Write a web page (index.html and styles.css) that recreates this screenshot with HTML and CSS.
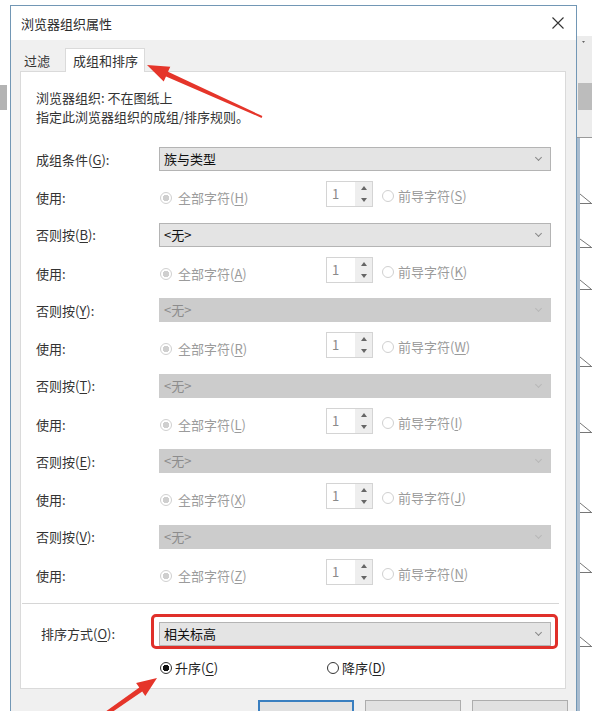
FILE: index.html
```html
<!DOCTYPE html>
<html>
    <head>
        <meta charset="utf-8">
        <link rel="stylesheet" href="styles.css">
    </head>
    <body>
        <div class="screen">
            <div class="edgeLeft"><span class="edgeBlock"></span></div>

            <div class="dialog">
                <div class="titlebar">
                    <span class="title">浏览器组织属性</span>
                    <svg class="close" width="12" height="12" viewBox="0 0 12 12">
                        <path d="M0.5 0.5 L11.5 11.5 M11.5 0.5 L0.5 11.5" stroke="#333" stroke-width="1.1" fill="none"/>
                    </svg>
                </div>

                <div class="body">
                    <div class="tabs">
                        <div class="tab">过滤</div>
                        <div class="tab active">成组和排序</div>
                    </div>

                    <div class="panel">
                        <p class="desc">浏览器组织: 不在图纸上<br>指定此浏览器组织的成组/排序规则。</p>

                        <div class="group">
                            <div class="row">
                                <span class="label">成组条件(<u>G</u>):</span>
                                <div class="combo">族与类型<span class="chev"></span></div>
                            </div>
                            <div class="row use">
                                <span class="label">使用:</span>
                                <span class="radio dis on"><i></i><span>全部字符(<u>H</u>)</span></span>
                                <span class="spin"><span class="val">1</span><span class="btns"><b class="up"></b><b class="down"></b></span></span>
                                <span class="radio dis second"><i></i><span>前导字符(<u>S</u>)</span></span>
                            </div>
                        </div>

                        <div class="group">
                            <div class="row">
                                <span class="label">否则按(<u>B</u>):</span>
                                <div class="combo">&lt;无&gt;<span class="chev"></span></div>
                            </div>
                            <div class="row use">
                                <span class="label">使用:</span>
                                <span class="radio dis on"><i></i><span>全部字符(<u>A</u>)</span></span>
                                <span class="spin"><span class="val">1</span><span class="btns"><b class="up"></b><b class="down"></b></span></span>
                                <span class="radio dis second"><i></i><span>前导字符(<u>K</u>)</span></span>
                            </div>
                        </div>

                        <div class="group">
                            <div class="row">
                                <span class="label">否则按(<u>Y</u>):</span>
                                <div class="combo off">&lt;无&gt;<span class="chev"></span></div>
                            </div>
                            <div class="row use">
                                <span class="label">使用:</span>
                                <span class="radio dis on"><i></i><span>全部字符(<u>R</u>)</span></span>
                                <span class="spin"><span class="val">1</span><span class="btns"><b class="up"></b><b class="down"></b></span></span>
                                <span class="radio dis second"><i></i><span>前导字符(<u>W</u>)</span></span>
                            </div>
                        </div>

                        <div class="group">
                            <div class="row">
                                <span class="label">否则按(<u>T</u>):</span>
                                <div class="combo off">&lt;无&gt;<span class="chev"></span></div>
                            </div>
                            <div class="row use">
                                <span class="label">使用:</span>
                                <span class="radio dis on"><i></i><span>全部字符(<u>L</u>)</span></span>
                                <span class="spin"><span class="val">1</span><span class="btns"><b class="up"></b><b class="down"></b></span></span>
                                <span class="radio dis second"><i></i><span>前导字符(<u>I</u>)</span></span>
                            </div>
                        </div>

                        <div class="group">
                            <div class="row">
                                <span class="label">否则按(<u>E</u>):</span>
                                <div class="combo off">&lt;无&gt;<span class="chev"></span></div>
                            </div>
                            <div class="row use">
                                <span class="label">使用:</span>
                                <span class="radio dis on"><i></i><span>全部字符(<u>X</u>)</span></span>
                                <span class="spin"><span class="val">1</span><span class="btns"><b class="up"></b><b class="down"></b></span></span>
                                <span class="radio dis second"><i></i><span>前导字符(<u>J</u>)</span></span>
                            </div>
                        </div>

                        <div class="group">
                            <div class="row">
                                <span class="label">否则按(<u>V</u>):</span>
                                <div class="combo off">&lt;无&gt;<span class="chev"></span></div>
                            </div>
                            <div class="row use">
                                <span class="label">使用:</span>
                                <span class="radio dis on"><i></i><span>全部字符(<u>Z</u>)</span></span>
                                <span class="spin"><span class="val">1</span><span class="btns"><b class="up"></b><b class="down"></b></span></span>
                                <span class="radio dis second"><i></i><span>前导字符(<u>N</u>)</span></span>
                            </div>
                        </div>

                        <div class="sep"></div>

                        <div class="row sort">
                            <span class="label">排序方式(<u>O</u>):</span>
                            <div class="combo marked">相关标高<span class="chev"></span></div>
                        </div>
                        <div class="order">
                            <span class="radio on active"><i></i><span>升序(<u>C</u>)</span></span>
                            <span class="radio"><i></i><span>降序(<u>D</u>)</span></span>
                        </div>
                    </div>

                    <div class="buttons">
                        <button class="btn default"></button>
                        <button class="btn"></button>
                        <button class="btn"></button>
                    </div>
                </div>
            </div>

            <div class="edgeRight">
                <svg width="15" height="711" viewBox="0 0 15 711">
                    <rect x="0" y="36" width="15" height="101" fill="#ececec"/>
                    <rect x="1" y="83" width="14" height="27" fill="#bcbcbc"/>
                    <path d="M5 41 L8 41 L6.5 43 Z" fill="#666"/>
                    <line x1="0" y1="137.5" x2="15" y2="137.5" stroke="#9a9a9a"/>
                    <rect x="0" y="138" width="3" height="573" fill="#a9bccf"/>
                    <path d="M3 194 L14 203 M3 203.5 L15 203.5" stroke="#777" fill="none"/>
                    <path d="M3 239 L14 247 M3 247.5 L15 247.5" stroke="#777" fill="none"/>
                    <path d="M3 280 L14 289 M3 289.5 L15 289.5" stroke="#777" fill="none"/>
                    <path d="M3 357 L14 366 M3 366.5 L15 366.5" stroke="#777" fill="none"/>
                    <path d="M3 423 L14 432 M3 432.5 L15 432.5" stroke="#777" fill="none"/>
                    <path d="M3 503 L14 512 M3 512.5 L15 512.5" stroke="#777" fill="none"/>
                    <path d="M3 563 L14 572 M3 572.5 L15 572.5" stroke="#777" fill="none"/>
                    <path d="M3 637 L14 646 M3 646.5 L15 646.5" stroke="#777" fill="none"/>
                </svg>
            </div>

            <svg class="marks" width="592" height="711" viewBox="0 0 592 711">
                <polygon points="147,65 170.3,66.8 168,71.8 262.4,116.1 261.6,117.9 166,76.4 163.7,81.4" fill="#e5352a"/>
                <polygon points="157,678 145.3,696.1 142.2,691.6 101.2,719.6 98.8,716.4 139.3,687.6 136.1,683.1" fill="#e5352a"/>
            </svg>
        </div>
    </body>
</html>
```

FILE: styles.css
```css
body{
    margin: 0;
    background: white;
    font-family: "Noto Sans CJK SC", "Noto Sans", sans-serif;
    font-size: 13px;
    color: #222;
}
u{
    text-decoration: underline;
    text-underline-offset: 2px;
}

.screen{
    position: relative;
    display: flex;
    align-items: flex-start;
    width: 592px;
    height: 711px;
    overflow: hidden;
}
.edgeLeft{
    width: 10px;
    flex: none;
    padding-top: 85px;
}
.edgeBlock{
    display: block;
    width: 7px;
    height: 25px;
    background: #b3b3b3;
}
.edgeRight{
    width: 15px;
    flex: none;
}
.edgeRight svg{
    display: block;
}

/* dialog window */
.dialog{
    width: 567px;
    flex: none;
    margin-top: 5px;
    border: solid 1px #7297b5;
    box-sizing: border-box;
    background: #f0f0f0;
}
.titlebar{
    height: 34px;
    background: white;
    display: flex;
    align-items: center;
    justify-content: space-between;
    padding: 0 12px 0 10px;
}
.title{
    color: #2b2b2b;
}
.close{
    display: block;
}

.body{
    padding: 8px 10px 0 9px;
}
.tabs{
    display: flex;
    align-items: flex-end;
    height: 23px;
}
.tab{
    height: 21px;
    line-height: 21px;
    padding: 0 15px 0 4px;
    color: #333;
}
.tab.active{
    position: relative;
    z-index: 1;
    height: 24px;
    line-height: 24px;
    margin-bottom: -1px;
    padding: 0 6px 0 7px;
    background: white;
    border: solid 1px #dadada;
    border-bottom: none;
    box-sizing: border-box;
    width: 80px;
}

.panel{
    height: 618px;
    box-sizing: border-box;
    background: white;
    border: solid 1px #dadada;
    padding: 16px 14px 0 15px;
}
.desc{
    margin: 0 0 21px 0;
    line-height: 19px;
    color: #333;
}

.group{
    margin-bottom: 15.6px;
}
.row{
    display: flex;
    align-items: center;
}
.label{
    width: 123px;
    flex: none;
    color: #333;
}
.combo{
    position: relative;
    flex: 1;
    height: 24px;
    line-height: 22px;
    box-sizing: border-box;
    border: solid 1px #b4b4b4;
    background: #e4e4e4;
    padding-left: 4px;
    color: #111;
}
.combo.off{
    background: #cccccc;
    border-color: #cccccc;
    color: #8c8c8c;
}
.chev{
    position: absolute;
    right: 9px;
    top: 7px;
    width: 4px;
    height: 4px;
    border-right: solid 1px #888;
    border-bottom: solid 1px #888;
    transform: rotate(45deg);
}
.combo.off .chev{
    border-color: #b8b8b8;
}

.row.use{
    align-items: flex-start;
    height: 26px;
    margin-top: 10px;
}
.row.use .label{
    padding-top: 9px;
    line-height: 16px;
}

.radio{
    display: flex;
    align-items: center;
    gap: 6px;
    line-height: 16px;
    color: #222;
}
.radio i{
    display: block;
    flex: none;
    width: 12px;
    height: 12px;
    box-sizing: border-box;
    border-radius: 50%;
    border: solid 1px #333;
    background: white;
}
.radio.dis{
    color: #9b9b9b;
}
.radio.dis i{
    border-color: #d0d0d0;
}
.radio.dis.on i{
    background: radial-gradient(circle, #cfcfcf 0 3px, white 3.5px);
}
.row.use .radio{
    width: 167px;
    flex: none;
    padding: 9px 0 0 1px;
    box-sizing: border-box;
}
.row.use .radio.second{
    width: auto;
    padding: 7px 0 0 9px;
    gap: 4px;
}

.spin{
    display: flex;
    width: 47px;
    height: 26px;
    flex: none;
    box-sizing: border-box;
    border: solid 1px #d4d4d4;
}
.spin .val{
    flex: 1;
    line-height: 24px;
    padding-left: 5px;
    color: #8a8a8a;
}
.spin .btns{
    width: 17px;
    display: flex;
    flex-direction: column;
    background: #eeeeee;
}
.spin b{
    flex: 1;
    display: flex;
    align-items: center;
    justify-content: center;
}
.spin b::after{
    content: "";
    border-left: 3px solid transparent;
    border-right: 3px solid transparent;
}
.spin b.up::after{
    border-bottom: 4px solid #666;
}
.spin b.down::after{
    border-top: 4px solid #666;
}

.sep{
    height: 1px;
    background: #d6d6d6;
    margin: 18px -8px 0 -14px;
}

.row.sort{
    margin-top: 18px;
}
.row.sort .label{
    padding-left: 5px;
    box-sizing: border-box;
}
.combo.marked::after{
    content: "";
    position: absolute;
    top: -9px;
    bottom: -4px;
    left: -9px;
    right: -8px;
    border: solid 3px #e0302a;
    border-radius: 5px;
}

.order{
    display: flex;
    margin-top: 14px;
    padding-left: 124px;
}
.order .radio{
    width: 167px;
    gap: 3px;
}
.order .radio.active i{
    background: radial-gradient(circle, #111 0 3px, white 3.5px);
}
.order .radio:last-child{
    width: auto;
}

.buttons{
    display: flex;
    justify-content: flex-end;
    gap: 11px;
    margin: 11px -2px 0 0;
}
.btn{
    width: 96px;
    height: 24px;
    border: solid 1px #adadad;
    background: #e1e1e1;
    padding: 0;
}
.btn.default{
    border: solid 2px #3a7fc0;
}

.marks{
    position: absolute;
    left: 0;
    top: 0;
    pointer-events: none;
}
```
